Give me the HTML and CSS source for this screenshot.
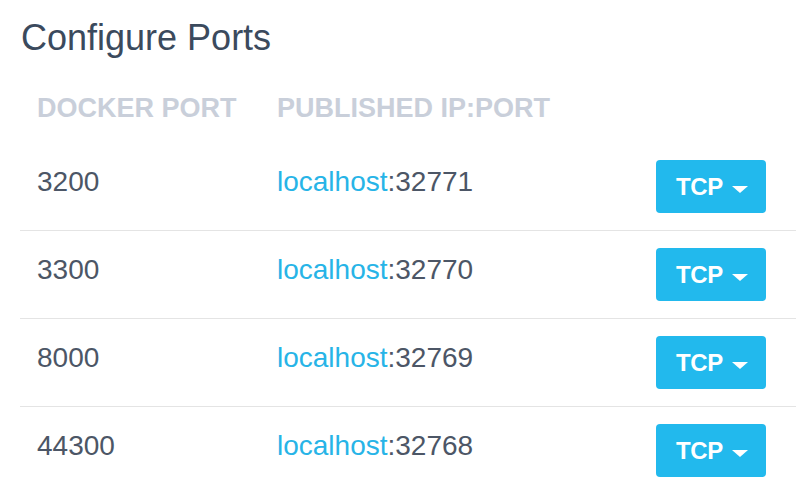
FILE: index.html
```html
<!DOCTYPE html>
<html>
<head>
<meta charset="utf-8">
<link rel="stylesheet" href="styles.css">
</head>
<body>
<div class="panel">
  <h1 class="title">Configure Ports</h1>
  <div class="head">
    <div class="col-docker">DOCKER PORT</div>
    <div class="col-pub">PUBLISHED IP:PORT</div>
  </div>
  <div class="rows">
    <div class="row">
      <div class="col-docker cell">3200</div>
      <div class="col-pub cell"><span class="host">localhost</span>:32771</div>
      <button class="proto">TCP<span class="caret"></span></button>
    </div>
    <div class="row">
      <div class="col-docker cell">3300</div>
      <div class="col-pub cell"><span class="host">localhost</span>:32770</div>
      <button class="proto">TCP<span class="caret"></span></button>
    </div>
    <div class="row">
      <div class="col-docker cell">8000</div>
      <div class="col-pub cell"><span class="host">localhost</span>:32769</div>
      <button class="proto">TCP<span class="caret"></span></button>
    </div>
    <div class="row last">
      <div class="col-docker cell">44300</div>
      <div class="col-pub cell"><span class="host">localhost</span>:32768</div>
      <button class="proto">TCP<span class="caret"></span></button>
    </div>
  </div>
</div>
</body>
</html>
```
FILE: styles.css
```css
html, body {
  margin: 0;
  padding: 0;
  background: #ffffff;
}
body {
  font-family: "Liberation Sans", Arial, sans-serif;
  width: 796px;
  height: 494px;
  overflow: hidden;
}
.panel {
  padding: 18px 0 0 20px;
}
.title {
  margin: 0;
  font-size: 36px;
  line-height: 40px;
  font-weight: normal;
  color: #3b4a5d;
  padding-left: 1px;
}
.head {
  display: flex;
  margin-top: 35px;
  padding-left: 17px;
  font-size: 27px;
  line-height: 30px;
  font-weight: bold;
  color: #c9cfda;
}
.rows {
  margin-top: 20px;
}
.row {
  display: flex;
  align-items: center;
  height: 87px;
  border-bottom: 1px solid #e4e4e4;
  padding: 0 30px 0 17px;
}
.row.last {
  border-bottom: none;
}
.col-docker {
  width: 240px;
  flex: none;
}
.col-pub {
  flex: 1;
}
.cell {
  font-size: 28px;
  line-height: 32px;
  color: #4c5666;
  padding-bottom: 10px;
}
.host {
  color: #27b4e7;
}
.proto {
  display: flex;
  align-items: center;
  height: 53px;
  width: 110px;
  padding: 0 0 0 20px;
  border: none;
  border-radius: 4px;
  background: #22b9ed;
  color: #ffffff;
  font-family: "Liberation Sans", Arial, sans-serif;
  font-size: 24px;
  font-weight: bold;
  letter-spacing: -0.4px;
  box-sizing: border-box;
}
.caret {
  display: block;
  width: 0;
  height: 0;
  margin-left: 9px;
  margin-top: 5px;
  border-left: 8px solid transparent;
  border-right: 8px solid transparent;
  border-top: 7px solid #ffffff;
}
```
